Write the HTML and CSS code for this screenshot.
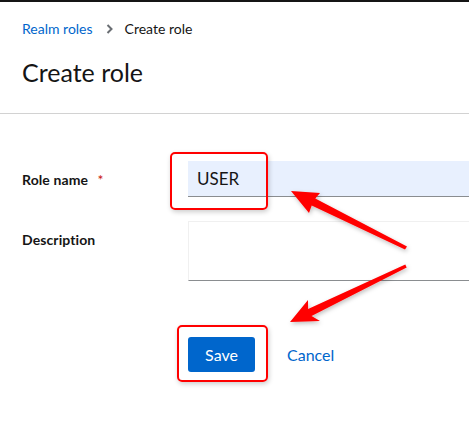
FILE: index.html
```html
<!DOCTYPE html>
<html lang="en">
<head>
<meta charset="utf-8">
<title>Create role</title>
<link rel="stylesheet" href="styles.css">
</head>
<body>
<div class="topbar"></div>
<header class="page-header">
  <nav class="breadcrumb">
    <a class="crumb-link" href="#">Realm roles</a>
    <svg class="crumb-sep" width="8" height="10" viewBox="0 0 8 10"><path d="M1.5 1 L5.5 5 L1.5 9" fill="none" stroke="#6a6e73" stroke-width="2"/></svg>
    <span class="crumb-current">Create role</span>
  </nav>
  <h1 class="title">Create role</h1>
</header>
<main class="form-section">
  <form class="form">
    <label class="form-label">Role name <span class="required">*</span></label>
    <div class="field"><input class="text-input" type="text" value="USER"></div>
    <label class="form-label">Description</label>
    <div class="field"><textarea class="textarea"></textarea></div>
    <div></div>
    <div class="actions">
      <button type="button" class="btn-primary">Save</button>
      <button type="button" class="btn-link">Cancel</button>
    </div>
  </form>
</main>
<div class="mark mark-input"></div>
<div class="mark mark-save"></div>
<svg class="arrows" width="469" height="433" viewBox="0 0 469 433">
  <defs>
    <filter id="sh" x="-20%" y="-20%" width="140%" height="140%">
      <feDropShadow dx="1" dy="2" stdDeviation="2" flood-color="#000" flood-opacity="0.25"/>
    </filter>
  </defs>
  <polygon filter="url(#sh)" fill="#ff0000" points="291,191 320,193 315.3,198.4 407,246.5 405,249.5 311.7,205.6 309,213"/>
  <polygon filter="url(#sh)" fill="#ff0000" points="290,322 308,300 308.1,308.9 405.3,264.5 406.7,267.5 311.5,316.1 320,321"/>
</svg>
</body>
</html>
```
FILE: styles.css
```css
* { box-sizing: border-box; }
html, body { margin: 0; padding: 0; background: #fff; }
body {
  font-family: Lato, "Open Sans", sans-serif;
  color: #151515;
  font-size: 14px;
  width: 469px;
  height: 433px;
  overflow: hidden;
  position: relative;
}
.topbar { height: 2px; background: #151515; }
.page-header {
  padding: 16px 22px 26px;
  border-bottom: 1px solid #d2d2d2;
}
.breadcrumb {
  display: flex;
  align-items: center;
  font-size: 14px;
  line-height: 21px;
  height: 21px;
}
.crumb-link { color: #0066cc; text-decoration: none; }
.crumb-sep { margin: 0 11px 0 13px; }
.crumb-current { color: #151515; }
.title {
  margin: 18px 0 0;
  font-size: 25px;
  font-weight: 400;
  line-height: 30px;
}
.form-section { padding: 47px 0 0 22px; }
.form {
  display: grid;
  grid-template-columns: 166px 1fr;
  row-gap: 24px;
}
.form-label {
  font-weight: 700;
  font-size: 14px;
  line-height: 21px;
  padding-top: 8px;
  letter-spacing: 0.1px;
}
.required { color: #c9190b; margin-left: 6px; font-weight: 400; }
.field { display: flex; }
.text-input {
  width: 100%;
  height: 36px;
  border: none;
  border-bottom: 1px solid #8a8d90;
  background: #e8f0fe;
  font-family: inherit;
  font-size: 17px;
  color: #151515;
  padding: 0 9px;
  outline: none;
}
.textarea {
  width: 100%;
  height: 60px;
  border: 1px solid #f0f0f0;
  border-bottom-color: #8a8d90;
  border-right: none;
  resize: none;
  font-family: inherit;
  font-size: 16px;
  padding: 6px 8px;
  outline: none;
  background: #fff;
}
.actions {
  display: flex;
  align-items: center;
  gap: 16px;
  margin-top: 32px;
}
.btn-primary {
  background: #0066cc;
  color: #fff;
  border: none;
  border-radius: 3px;
  height: 35px;
  width: 67px;
  padding: 0;
  font-family: inherit;
  font-size: 16px;
}
.btn-link {
  background: none;
  border: none;
  color: #0066cc;
  font-family: inherit;
  font-size: 16px;
  padding: 0 16px;
}
.mark {
  position: absolute;
  border: 2px solid #ff0000;
  border-radius: 5px;
  box-shadow: 1px 2px 5px rgba(0,0,0,0.2);
}
.mark-input { left: 170px; top: 152px; width: 98px; height: 58px; }
.mark-save { left: 177px; top: 325px; width: 91px; height: 57px; }
.arrows { position: absolute; left: 0; top: 0; pointer-events: none; }
```
